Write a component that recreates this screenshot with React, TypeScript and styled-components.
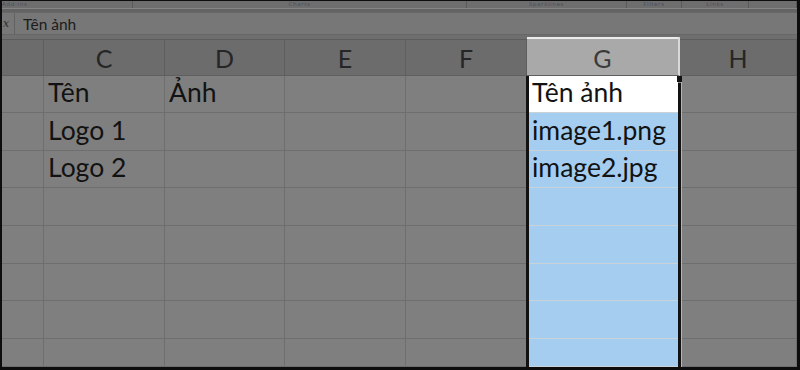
import React from "react";
import styled, { createGlobalStyle } from "styled-components";

const GlobalStyle = createGlobalStyle`
  html, body { margin: 0; padding: 0; background: #0c0c0c; }
  * { box-sizing: border-box; }
`;

const Frame = styled.div`
  width: 800px;
  height: 370px;
  border-style: solid;
  border-color: #0d0d0d;
  border-width: 1px 3px 3px 2px;
  background: #7f7f7f;
  overflow: hidden;
  display: flex;
  flex-direction: column;
  font-family: Lato, "Noto Sans", sans-serif;
`;

const Ribbon = styled.div`
  height: 7px;
  display: flex;
  background: #6e6e6e;
  overflow: hidden;
`;

const RibbonGroup = styled.div<{ $w: number; $align?: string }>`
  width: ${(p) => p.$w}px;
  flex: none;
  border-right: 1px solid #5a5a5a;
  display: flex;
  align-items: flex-start;
  justify-content: ${(p) => p.$align || "center"};
  overflow: hidden;
`;

const RibbonLabel = styled.span`
  font-family: "Noto Sans", sans-serif;
  font-size: 6px;
  line-height: 6px;
  letter-spacing: 0.6px;
  color: #4a5060;
  white-space: nowrap;
`;

const RibbonEdge = styled.div`
  height: 4px;
  background: #636363;
  border-top: 1px solid #858585;
`;

const FormulaBar = styled.div`
  height: 23px;
  display: flex;
  background: #777777;
  border-top: 1px solid #686868;
  border-bottom: 1px solid #676767;
`;

const FxBox = styled.div`
  width: 13px;
  flex: none;
  border-right: 1px solid #626262;
  display: flex;
  align-items: center;
  padding-left: 1px;
`;

const FxGlyph = styled.span`
  font-family: "DejaVu Serif", serif;
  font-style: italic;
  font-size: 11px;
  line-height: 11px;
  color: #2c2c2c;
`;

const FormulaInput = styled.div`
  flex: 1;
  display: flex;
  align-items: center;
  padding-left: 8px;
  font-family: Lato, "Noto Sans", sans-serif;
  font-size: 15.5px;
  color: #1c1c1c;
`;

const HeaderGap = styled.div`
  height: 5px;
  background: #6f6f6f;
  border-bottom: 1px solid #5c5c5c;
`;

const Grid = styled.div`
  position: relative;
  flex: 1;
  display: grid;
  grid-template-columns: 42px 121px 120px 121px 121px 153px 117px;
  grid-template-rows: 36px 37px 38px 37px 38px 38px 37px 38px 28px;
`;

const HeaderCell = styled.div<{ $sel?: boolean }>`
  display: flex;
  align-items: flex-end;
  justify-content: center;
  padding-bottom: 2px;
  font-size: 25px;
  line-height: 1.2;
  color: ${(p) => (p.$sel ? "#3a3a3a" : "#262626")};
  background: ${(p) => (p.$sel ? "#a9a9a9" : "#6c6c6c")};
  border-right: ${(p) => (p.$sel ? "2px solid #d8d8d8" : "1px solid #5f5f5f")};
  border-bottom: 1px solid #5f5f5f;
  margin-top: ${(p) => (p.$sel ? "-3px" : "0")};
  box-shadow: ${(p) => (p.$sel ? "inset 0 2px 0 #ececec" : "none")};
`;

type Variant = "grey" | "white" | "blue";

const Cell = styled.div<{ $v: Variant }>`
  display: flex;
  align-items: flex-end;
  padding: 0 0 3px ${(p) => (p.$v === "grey" ? "4px" : "5px")};
  font-size: 26.5px;
  line-height: 1.2;
  color: #121212;
  white-space: nowrap;
  overflow: hidden;
  background: ${(p) =>
    p.$v === "white" ? "#ffffff" : p.$v === "blue" ? "#a4cdf0" : "#7f7f7f"};
  border-right: 1px solid ${(p) => (p.$v === "grey" ? "#6e6e6e" : "transparent")};
  border-bottom: 1px solid ${(p) => (p.$v === "grey" ? "#6e6e6e" : "#c9d2d9")};
`;

const Selection = styled.div`
  position: absolute;
  left: 524px;
  top: 36px;
  width: 155px;
  bottom: 0;
  border-left: 3px solid #121212;
  border-right: 3px solid #121212;
  box-shadow: 1px 0 0 #b4b4b4;
  pointer-events: none;

  &::before {
    content: "";
    position: absolute;
    right: -4px;
    top: 0;
    width: 5px;
    height: 6px;
    background: #121212;
  }
  &::after {
    content: "";
    position: absolute;
    right: -3px;
    top: 6px;
    width: 3px;
    height: 1px;
    background: #8a8a8a;
  }
`;

const columns = ["", "C", "D", "E", "F", "G", "H"];
const selCol = 5;

const data: Record<number, string[]> = {
  0: ["", "Tên", "Ảnh", "", "", "Tên ảnh", ""],
  1: ["", "Logo 1", "", "", "", "image1.png", ""],
  2: ["", "Logo 2", "", "", "", "image2.jpg", ""],
};

const rowCount = 8;

const ribbonGroups: { w: number; label: string; align?: string }[] = [
  { w: 131, label: "Add-ins", align: "flex-start" },
  { w: 334, label: "Charts" },
  { w: 160, label: "Sparklines" },
  { w: 55, label: "Filters" },
  { w: 67, label: "Links" },
  { w: 48, label: "" },
];

export default function App() {
  return (
    <>
      <GlobalStyle />
      <Frame>
        <Ribbon>
          {ribbonGroups.map((g, i) => (
            <RibbonGroup key={i} $w={g.w} $align={g.align}>
              <RibbonLabel>{g.label}</RibbonLabel>
            </RibbonGroup>
          ))}
        </Ribbon>
        <RibbonEdge />
        <FormulaBar>
          <FxBox>
            <FxGlyph>x</FxGlyph>
          </FxBox>
          <FormulaInput>Tên ảnh</FormulaInput>
        </FormulaBar>
        <HeaderGap />
        <Grid>
          {columns.map((c, i) => (
            <HeaderCell key={"h" + i} $sel={i === selCol}>
              {c}
            </HeaderCell>
          ))}
          {Array.from({ length: rowCount }).map((_, r) =>
            columns.map((_, c) => {
              const v: Variant =
                c === selCol ? (r === 0 ? "white" : "blue") : "grey";
              return (
                <Cell key={r + "-" + c} $v={v}>
                  {data[r]?.[c] ?? ""}
                </Cell>
              );
            })
          )}
          <Selection />
        </Grid>
      </Frame>
    </>
  );
}
